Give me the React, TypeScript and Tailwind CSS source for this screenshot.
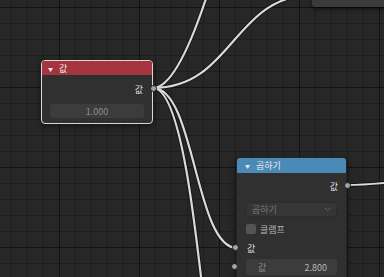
import React from 'react';

const FONT = "font-['Noto_Sans_CJK_KR','Noto_Sans',sans-serif]";

function Socket({ className }: { className: string }) {
  return (
    <span
      className={`absolute w-[7px] h-[7px] rounded-full bg-[#a3a3a3] border border-[#1a1a1a] ${className}`}
    />
  );
}

function Grid() {
  return (
    <svg className="absolute inset-0" width="384" height="277">
      <defs>
        <pattern id="minor" x="11" y="7" width="16" height="16" patternUnits="userSpaceOnUse">
          <path d="M0.5 0 V16 M0 0.5 H16" stroke="#1e1e1e" strokeWidth="1" fill="none" />
        </pattern>
        <pattern id="major" x="59" y="7" width="80" height="80" patternUnits="userSpaceOnUse">
          <path d="M0.5 0 V80 M0 0.5 H80" stroke="#121212" strokeWidth="1" fill="none" />
        </pattern>
      </defs>
      <rect width="384" height="277" fill="#272727" />
      <rect width="384" height="277" fill="url(#minor)" />
      <rect width="384" height="277" fill="url(#major)" />
    </svg>
  );
}

// links between sockets, drawn under the nodes
const LINKS = [
  'M153 88 C175 88 198 25 212 -20',
  'M153 88 C233 88 233 -5 313 -5',
  'M153 88 C195 88 195 248 237 248',
  'M153 88 C208 88 210 600 262 600',
  'M347 185 C380 185 400 180 450 178',
];

function Links() {
  return (
    <svg className="absolute inset-0" width="384" height="277">
      {LINKS.map((d) => (
        <path key={d + 'b'} d={d} stroke="#151515" strokeWidth="4" fill="none" />
      ))}
      {LINKS.map((d) => (
        <path key={d} d={d} stroke="#dadada" strokeWidth="2.2" fill="none" />
      ))}
    </svg>
  );
}

export default function App() {
  return (
    <div className={`relative w-[384px] h-[277px] overflow-hidden bg-[#272727] ${FONT} text-[9px] leading-none`}>
      <Grid />

      {/* node cut off at the top right */}
      <div className="absolute left-[312px] top-[-10px] w-[90px] h-[17px] rounded-[3px] bg-[#3b3b3b] shadow-[0_2px_4px_rgba(0,0,0,0.6)]" />

      <Links />

      {/* 값 (value) node */}
      <div className="absolute left-[41px] top-[60px] w-[112px] h-[64px] rounded-[4px] border border-[#d8d8d8] bg-[#303030] shadow-[0_2px_6px_rgba(0,0,0,0.5)]">
        <div className="h-[14px] rounded-t-[3px] bg-[#a4343e] flex items-center pl-[6px] gap-[6px] text-[#ececec]">
          <span className="text-[5px]">▼</span>
          <span>값</span>
        </div>
        <div className="relative mt-[7px] h-[14px] flex items-center justify-end pr-[9px] text-[#dedede]">
          값
          <Socket className="right-[-5px] top-[3px]" />
        </div>
        <div className="mx-[8px] mt-[8px] h-[14px] rounded-[3px] bg-[#3c3c3c] flex items-center justify-center text-[#8c8c8c]">
          1.000
        </div>
      </div>

      {/* 곱하기 (multiply) node */}
      <div className="absolute left-[236px] top-[157px] w-[111px] h-[130px] rounded-[4px] border border-[#262626] bg-[#303030] shadow-[0_2px_6px_rgba(0,0,0,0.5)]">
        <div className="h-[15px] rounded-t-[3px] bg-[#4a8ab6] flex items-center pl-[8px] gap-[6px] text-[#e8e8e8]">
          <span className="text-[5px]">▼</span>
          <span>곱하기</span>
        </div>
        <div className="relative mt-[6px] h-[14px] flex items-center justify-end pr-[8px] text-[#dedede]">
          값
          <Socket className="right-[-5px] top-[3px]" />
        </div>
        <div className="mx-[9px] mt-[9px] h-[15px] rounded-[3px] bg-[#363636] border border-[#2c2c2c] flex items-center justify-between px-[5px] text-[#767676]">
          <span>곱하기</span>
          <svg width="7" height="5" viewBox="0 0 7 5">
            <path d="M1 1 L3.5 3.5 L6 1" stroke="#5e5e5e" strokeWidth="1" fill="none" />
          </svg>
        </div>
        <div className="mx-[9px] mt-[5px] h-[14px] flex items-center gap-[4px] text-[#b4b4b4]">
          <span className="w-[10px] h-[10px] rounded-[2px] bg-[#545454]" />
          <span>클램프</span>
        </div>
        <div className="relative mt-[5px] h-[14px] flex items-center pl-[10px] text-[#dedede]">
          값
          <Socket className="left-[-5px] top-[3px]" />
        </div>
        <div className="relative mx-[9px] mt-[4px] h-[16px] rounded-[3px] bg-[#3c3c3c] flex items-center justify-between pl-[12px] pr-[10px]">
          <span className="text-[#8a8a8a]">값</span>
          <span className="text-[#b8b8b8]">2.800</span>
          <Socket className="left-[-15px] top-[4px]" />
        </div>
      </div>
    </div>
  );
}
